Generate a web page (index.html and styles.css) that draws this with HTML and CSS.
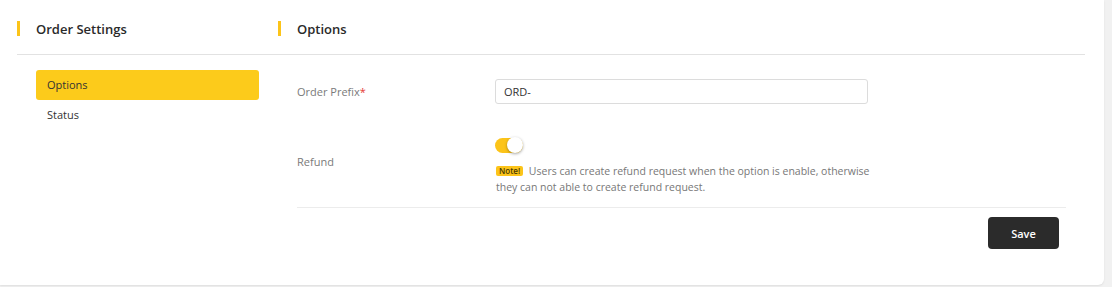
FILE: index.html
```html
<!DOCTYPE html>
<html lang="en">
<head>
  <meta charset="UTF-8" />
  <meta name="viewport" content="width=device-width, initial-scale=1.0" />
  <title>Order Settings</title>
  <link rel="stylesheet" href="styles.css">
</head>
<body>
  <div class="page">
    <div class="card">
      <div class="card-head">
        <div class="title title-side">Order Settings</div>
        <div class="title">Options</div>
      </div>
      <div class="card-body">
        <ul class="side-nav">
          <li class="nav-item active">Options</li>
          <li class="nav-item">Status</li>
        </ul>
        <form class="settings">
          <div class="form-row row-prefix">
            <label class="form-label" for="prefix">Order Prefix<span class="req">*</span></label>
            <input class="form-input" id="prefix" type="text" value="ORD-" />
          </div>
          <div class="form-row row-refund">
            <label class="form-label">Refund</label>
            <div class="form-field">
              <label class="switch">
                <input type="checkbox" checked />
                <span class="slider"></span>
              </label>
              <p class="hint"><span class="badge">Note!</span> <span class="hint-text">Users can create refund request when the option is enable, otherwise they can not able to create refund request.</span></p>
            </div>
          </div>
          <div class="form-actions">
            <button type="button" class="btn-save">Save</button>
          </div>
        </form>
      </div>
    </div>
  </div>
</body>
</html>
```

FILE: styles.css
```css
* { box-sizing: border-box; }
body {
  margin: 0;
  background: #f1f1f1;
  font-family: 'Open Sans', 'Noto Sans', sans-serif;
  color: #2b2b2b;
}
.page {
  padding: 0 8px 2px 0;
}
.card {
  background: #fff;
  height: 285px;
  border-radius: 0 0 6px 0;
  box-shadow: 0 1px 2px rgba(0, 0, 0, 0.08);
  padding: 0 19px 0 17px;
}

/* header */
.card-head {
  display: flex;
  height: 55px;
  align-items: center;
  border-bottom: 1px solid #e2e2e2;
  padding-top: 4px;
}
.title {
  position: relative;
  font-size: 13px;
  font-weight: 600;
  color: #2a2a2a;
  padding-left: 19px;
}
.title::before {
  content: '';
  position: absolute;
  left: 0;
  top: 1px;
  width: 3px;
  height: 15px;
  background: #fcc419;
}
.title-side { width: 261px; }

/* body */
.card-body {
  display: flex;
}
.side-nav {
  list-style: none;
  margin: 15px 0 0;
  padding: 0 19px;
  width: 261px;
}
.nav-item {
  font-size: 11px;
  height: 30px;
  line-height: 29px;
  padding-left: 11px;
  color: #333;
  border-radius: 3px;
}
.nav-item.active { background: #fccb1b; }

.settings {
  flex: 1;
  padding: 0 19px;
}
.form-row {
  display: flex;
  border-bottom: 1px solid #ececec;
}
.row-prefix {
  border-bottom: none;
  padding-top: 24px;
  height: 74px;
  align-items: flex-start;
}
.row-prefix .form-label { padding-top: 5px; }
.form-label {
  width: 198px;
  font-size: 11px;
  color: #7a7a7a;
}
.req { color: #e53935; }
.form-input {
  width: 373px;
  height: 25px;
  border: 1px solid #dcdcdc;
  border-radius: 3px;
  padding: 0 8px;
  font-family: inherit;
  font-size: 11px;
  color: #333;
}
.row-refund {
  padding-top: 9px;
  height: 79px;
}
.row-refund .form-label { padding-top: 16px; }
.form-field { width: 376px; }

.switch {
  position: relative;
  display: block;
  width: 28px;
  height: 15px;
}
.switch input { display: none; }
.slider {
  position: absolute;
  inset: 0;
  background: #fcc419;
  border-radius: 8px;
}
.slider::after {
  content: '';
  position: absolute;
  right: 0;
  top: -1px;
  width: 16px;
  height: 16px;
  border-radius: 50%;
  background: #fff;
  box-shadow: 0 1px 3px rgba(0, 0, 0, 0.35);
}
.hint {
  margin: 10px 0 0 1px;
  font-size: 10.5px;
  line-height: 16px;
  color: #777;
}
.badge {
  display: inline-block;
  background: #fcc419;
  color: #4a3a00;
  font-size: 8px;
  font-weight: 600;
  line-height: 10px;
  padding: 0 3px;
  border-radius: 2px;
  margin-right: 3px;
  vertical-align: 1px;
}

.form-actions {
  display: flex;
  justify-content: flex-end;
  padding: 9px 7px 0 0;
}
.btn-save {
  width: 71px;
  height: 32px;
  border: none;
  border-radius: 4px;
  background: #2b2b2b;
  color: #fff;
  font-family: inherit;
  font-size: 11px;
  font-weight: 600;
}
```
